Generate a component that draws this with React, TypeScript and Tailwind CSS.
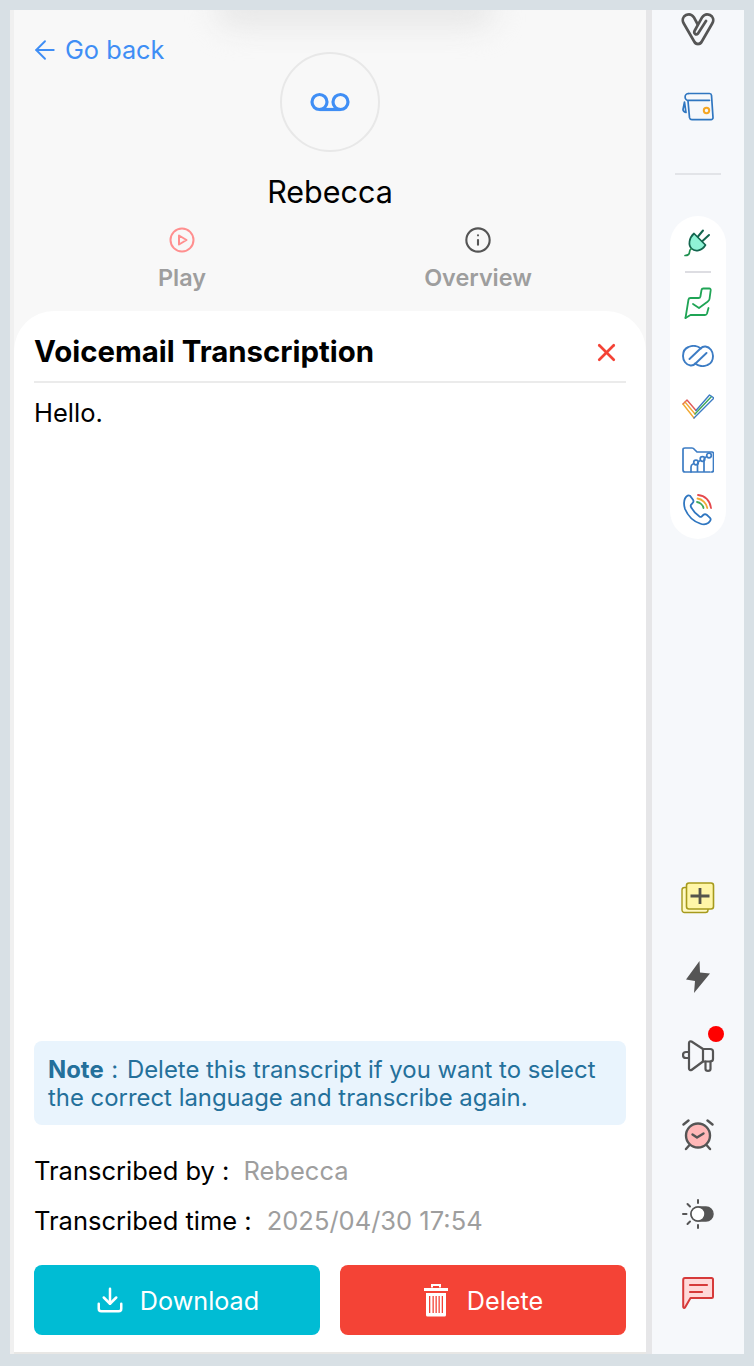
import React from "react";
import { ArrowLeft, Download, X, Info } from "lucide-react";

const font = { fontFamily: "Inter, 'Liberation Sans', sans-serif" };

function Voicemail() {
  return (
    <svg width="40" height="20" viewBox="0 0 40 20" fill="none" stroke="#3f8ef5" strokeWidth="3.200">
      <circle cx="9.500" cy="10" r="7.500" />
      <circle cx="30.500" cy="10" r="7.500" />
      <path d="M9.500 17.500h21" />
    </svg>
  );
}

function Trash() {
  return (
    <svg width="26" height="34" viewBox="0 0 26 34" fill="none">
      <path d="M9 4.500V2h8v2.500" stroke="#fff" strokeWidth="2" />
      <path d="M1 5h24v3H1z" fill="#fff" />
      <path fillRule="evenodd" clipRule="evenodd" d="M3 10h20v22a1.500 1.500 0 0 1-1.500 1.500h-17A1.500 1.500 0 0 1 3 32zM6 13v17h1.300V13zM9.500 13v17h1.300V13zM12.500 13v17h1.300V13zM15.500 13v17h1.300V13zM18.700 13v17H20V13z" fill="#fff" />
    </svg>
  );
}

function Paperclip() {
  return (
    <svg width="34" height="34" viewBox="0 0 34 34" fill="none" stroke="#555" strokeWidth="2.700" strokeLinecap="round" strokeLinejoin="round">
      <path d="M17 32c-1.800 0-3-1-3.800-2.500L2.500 11C1 8 2 4.500 5 3c3-1.300 6-.4 7.800 2.200L16.500 12" />
      <path d="M17 32c1.800 0 3-1 3.800-2.500L31.500 11c1.500-3 .5-6.500-2.500-8-3-1.300-6-.4-7.800 2.200L13.500 19c-1 2.200 1.500 4.500 3.500 2.500L25 9" />
    </svg>
  );
}

function Wallet() {
  return (
    <svg width="32" height="30" viewBox="0 0 32 30" fill="none" stroke="#2f76c0" strokeWidth="1.700" strokeLinecap="round" strokeLinejoin="round">
      <path d="M6.500 1.500h21a2 2 0 0 1 2 1.800L31 25.500a2 2 0 0 1-2 2.200H10a2.500 2.500 0 0 1-2.500-2L6 9" />
      <path d="M6.500 1.500a3.300 3.300 0 0 0 0 6.800h21" />
      <path d="M2.500 10L1 17.500c0 1.500 1.200 2.500 3 3L2.500 10z" />
      <circle cx="24.500" cy="18.500" r="2.700" stroke="#f5a623" strokeWidth="2" />
    </svg>
  );
}

function Plug() {
  return (
    <svg width="28" height="28" viewBox="0 0 28 28" fill="none" stroke="#14664f" strokeWidth="1.700" strokeLinecap="round" strokeLinejoin="round">
      <path d="M10 4.500L21.500 16C18 22 11 23 7.500 19.500 4 16 5 9 10 4.500z" fill="#8ff3d6" />
      <path d="M14 7.500L19 1.500M18.500 12L25 6" strokeWidth="2" />
      <path d="M7 20c-2.500 1.500-.5 4-2.500 5.500-1 .8-2 1-3.500 1" stroke="#1f8f4f" />
    </svg>
  );
}

function Sign() {
  return (
    <svg width="28" height="32" viewBox="0 0 28 32" fill="none" stroke="#1fa455" strokeWidth="1.800" strokeLinecap="round" strokeLinejoin="round">
      <path d="M1.500 31L4.500 12.500c.2-1 1-1.500 2-1.500h8c1 0 1.700-.6 1.900-1.500L17.500 3c.2-1 .8-1.500 1.800-1.500h6c1 0 1.500.7 1.400 1.700L25.500 12c-.2 1.300-1 2-2 2.800L15 21l-6-4" />
      <path d="M1.500 31l5-3H21c1 0 1.700-.6 2-1.500L24.500 21" />
    </svg>
  );
}

function Links() {
  const d = "M19 3.500C15 .500 10 .500 6.500 2 2.500 3.500 1 7.500 1 11c0 4.500 3 9 7.500 9.500 2 .2 3.500-.4 5-2L24.500 8";
  return (
    <svg width="32" height="22" viewBox="0 0 32 22" fill="none" stroke="#3c7cc4" strokeWidth="1.900" strokeLinecap="round" strokeLinejoin="round">
      <path d={d} />
      <path d={d} transform="rotate(180 16 11)" />
    </svg>
  );
}

function Check() {
  return (
    <svg width="32" height="26" viewBox="0 0 32 26" fill="none" strokeWidth="1.400" strokeLinecap="round" strokeLinejoin="round">
      <path d="M1 10l4-4 9 10.500" stroke="#e05a5a" />
      <path d="M3 8l10 12" stroke="#f2a935" />
      <path d="M1 10l11 14" stroke="#f2a935" />
      <path d="M13 20L29.500 2.500" stroke="#3fa85a" />
      <path d="M12 24L32 4l-4.500-3L14 16.500" stroke="#3c7cc4" />
    </svg>
  );
}

function Folder() {
  return (
    <svg width="32" height="26" viewBox="0 0 32 26" fill="none" stroke="#3c7cc4" strokeWidth="1.700" strokeLinecap="round" strokeLinejoin="round">
      <path d="M9 25H3c-1.200 0-2-.8-2-2V2.500C1 1.500 1.800 1 3 1h7c1 0 1.800.5 2.500 1.500L15 5h15c1 0 1.500.7 1.500 2v16c0 1.200-.8 2-2 2" />
      <path d="M9 25v-5c0-1.500.8-2.500 2-3M15.500 25v-8c0-1.500.8-2.500 2-3M22 25V13c0-1.500.8-2.500 2-3M9 25h19" />
      <circle cx="14" cy="15.500" r="2.300" />
      <circle cx="20.500" cy="12" r="2.300" />
      <circle cx="27" cy="8.500" r="2.300" />
    </svg>
  );
}

function Phone() {
  return (
    <svg width="30" height="32" viewBox="0 0 30 32" fill="none" strokeLinecap="round">
      <path d="M2 4.500c1.300-2.500 3.500-3.500 5-2.800l3 4c.8 1.300.5 2.500-.5 3.500L8 10.800c-.5.700-.4 1.400 0 2.200 1.800 3.500 5.500 7.500 8.500 9.500.8.500 1.500.5 2.200 0l1.800-1.700c1-.8 2-.8 3.200 0l3.300 3c1.200 1.300.8 3-1.500 5-2.500 2-5.500 2-8.500.7C11 27.500 5 22 2 15 .8 11 .6 7.500 2 4.500z" stroke="#2f76c0" strokeWidth="1.800" />
      <path d="M15 1c7 .5 12 5.500 13 13" stroke="#e5484d" strokeWidth="1.800" />
      <path d="M14.500 4.500c4.500.5 9 4.500 9.800 9.500" stroke="#f2a935" strokeWidth="1.800" />
      <path d="M14 8c3 .5 6 3 6.500 6" stroke="#3fa85a" strokeWidth="1.800" />
    </svg>
  );
}

function Notes() {
  return (
    <svg width="34" height="32" viewBox="0 0 34 32" fill="none" strokeLinejoin="round">
      <rect x="1" y="5.500" width="26" height="25" rx="2.500" fill="#fff9c4" stroke="#a69a1c" strokeWidth="1.400" />
      <rect x="5.500" y="1" width="27" height="26" rx="2.500" fill="#fff6a8" stroke="#a69a1c" strokeWidth="1.600" />
      <path d="M19 6v16M9.500 14h19" stroke="#55554c" strokeWidth="2.800" />
    </svg>
  );
}

function Bolt() {
  return (
    <svg width="24" height="32" viewBox="0 0 24 32" fill="#555">
      <path d="M13.500 0L0 18.500l9 1.500L8 32 24 12.500 14 11.500z" />
    </svg>
  );
}

function Megaphone() {
  return (
    <svg width="33" height="33" viewBox="0 0 33 33" fill="none" stroke="#555" strokeWidth="2.200" strokeLinecap="round" strokeLinejoin="round">
      <path d="M7 3c0-1.500 1.500-2 2.500-1.500L21 9h7c1.500 0 3 1 3 2.500V19c0 1.500-1.500 2.500-3 2.500h-7L9.500 30c-1 .5-2.500 0-2.500-1.500z" />
      <path d="M21 9v12.500" />
      <path d="M7 12H4a3 3 0 0 0 0 6h3" />
      <path d="M23.500 21.500V29c0 2.500 5 2.500 5 0v-7.500" />
    </svg>
  );
}

function Alarm() {
  return (
    <svg width="32" height="32" viewBox="0 0 32 32" fill="none" stroke="#555" strokeWidth="2.400" strokeLinecap="round" strokeLinejoin="round">
      <circle cx="16" cy="16.500" r="12" fill="#ffb8b8" />
      <path d="M10.500 15.500l4.500 3 6.500-4" />
      <path d="M1.500 5.500l5-4M30.500 5.500l-5-4M7.500 26l-3.500 4M24.500 26l3.500 4" />
    </svg>
  );
}

function Theme() {
  return (
    <svg width="32" height="30" viewBox="0 0 32 30" fill="none" stroke="#555" strokeWidth="2" strokeLinecap="round">
      <rect x="9" y="8" width="22" height="14" rx="7" fill="#555" stroke="#555" strokeWidth="1.500" />
      <circle cx="16" cy="15" r="7" fill="#fff" stroke="#555" strokeWidth="1.500" />
      <path d="M16 1v3M16 26v3M1 15h3.500M5.500 5l2.500 2.500M5.500 25L8 22.500" />
    </svg>
  );
}

function Chat() {
  return (
    <svg width="32" height="32" viewBox="0 0 32 32" fill="none" stroke="#d63a3a" strokeWidth="2" strokeLinecap="round" strokeLinejoin="round">
      <path d="M3 1h26.500c.8 0 1.500.7 1.500 1.500v17c0 .8-.7 1.500-1.500 1.500H8.500L3 30.500c-.8.800-1.800.2-1.800-.7V3C1.200 1.800 2 1 3 1z" fill="#ffd9d9" />
      <path d="M8 8h17M8 15h12" strokeWidth="2.200" />
    </svg>
  );
}

function PlayIcon() {
  return (
    <svg width="26" height="26" viewBox="0 0 26 26" fill="none" stroke="#ff8f8f" strokeWidth="2" strokeLinejoin="round">
      <circle cx="13" cy="13" r="11.500" />
      <path d="M10 8.500l7.500 4.500-7.500 4.500z" />
    </svg>
  );
}

export default function App() {
  return (
    <div style={font} className="h-[1366px] w-[754px] overflow-hidden bg-[#d8e0e5] pt-[10px] pr-[10px] pb-[12px] pl-[10px]">
      <div className="flex h-full w-full">
        <div className="relative flex w-[636px] flex-col overflow-hidden border-l-4 border-[#f0f0f0] bg-[#f8f8f8]">
          <div className="absolute top-[-22px] left-[201px] h-[40px] w-[280px] rounded-full bg-[#e8e8e8] blur-[14px]"></div>
          <div className="relative h-[301px] shrink-0">
            <div className="absolute top-[24px] left-[16px] flex items-center gap-[5px] text-[#3f8ef5]">
              <ArrowLeft size={30} strokeWidth={1.500} />
              <span className="text-[25.300px] leading-[32px]">Go back</span>
            </div>
            <div className="flex flex-col items-center pt-[42px]">
              <div className="flex h-[100px] w-[100px] items-center justify-center rounded-full border-2 border-[#e8e8e8]">
                <Voicemail />
              </div>
              <div className="mt-[20px] text-[30.500px] leading-[40px] text-black">Rebecca</div>
            </div>
            <div className="mt-[15px] flex">
              <div className="flex w-[336px] flex-col items-center">
                <PlayIcon />
                <span className="mt-[10px] text-[23.400px] leading-[30px] font-semibold text-[#9e9e9e]">Play</span>
              </div>
              <div className="flex w-[256px] flex-col items-center">
                <Info size={28} strokeWidth={1.800} color="#555" className="my-[-1px]" />
                <span className="mt-[10px] text-[23.400px] leading-[30px] font-semibold text-[#9e9e9e]">Overview</span>
              </div>
            </div>
          </div>
          <div className="flex min-h-0 flex-1 flex-col rounded-t-[40px] border-b-2 border-[#e8e7e5] bg-white px-[20px] pb-[17px]">
            <div className="flex h-[72px] shrink-0 items-center justify-between border-b-2 border-[#ebebeb] pt-[12px]">
              <span className="text-[29.400px] leading-[40px] font-bold text-black">Voicemail Transcription</span>
              <X size={29} strokeWidth={2.200} color="#f44336" className="mr-[5px]" />
            </div>
            <p className="mt-[14px] text-[25.500px] leading-[32px] text-black">Hello.</p>
            <div className="mt-auto rounded-[8px] bg-[#e9f4fd] px-[14px] pt-[15px] pb-[13px] text-[23.900px] leading-[28px] text-[#24709b]">
              <b className="mr-[1px] font-bold">Note</b> : <span className="ml-[2px]">Delete this transcript if you want to select the correct language and transcribe again.</span>
            </div>
            <div className="mt-[30px] flex text-[25.500px] leading-[32px]">
              <span className="text-black">Transcribed by :</span>
              <span className="ml-[14px] text-[#9e9e9e]">Rebecca</span>
            </div>
            <div className="mt-[18px] flex text-[25.500px] leading-[32px]">
              <span className="text-black">Transcribed time :</span>
              <span className="ml-[15px] text-[#9e9e9e]">2025/04/30 17:54</span>
            </div>
            <div className="mt-[28px] flex gap-[20px]">
              <button className="flex h-[70px] w-[286px] items-center justify-center gap-[15px] rounded-[8px] bg-[#00bcd4] text-[25.200px] text-white">
                <Download size={30} strokeWidth={2} />
                <span className="pt-[3px]">Download</span>
              </button>
              <button className="flex h-[70px] w-[286px] items-center justify-center gap-[18px] rounded-[8px] bg-[#f44336] text-[25.200px] text-white">
                <Trash />
                <span className="pt-[3px]">Delete</span>
              </button>
            </div>
          </div>
        </div>
        <div className="w-[6px] bg-[#e6e6e8]"></div>
        <div className="flex w-[92px] flex-col items-center bg-[#f6f8fb]">
          <div className="flex h-[166px] w-full shrink-0 flex-col items-center">
            <div className="mt-[2px] h-[34px]"><Paperclip /></div>
            <div className="mt-[46px] h-[30px]"><Wallet /></div>
            <div className="mt-[51px] h-[2px] w-[46px] bg-[#e2e4e8]"></div>
          </div>
          <div className="mt-[40px] flex w-[56px] flex-col items-center rounded-[28px] bg-white pt-[13px] pb-[13px]">
            <div className="h-[28px]"><Plug /></div>
            <div className="my-[14px] h-[2px] w-[26px] bg-[#dddde2]"></div>
            <div className="h-[32px]"><Sign /></div>
            <div className="mt-[26px] h-[22px]"><Links /></div>
            <div className="mt-[27px] h-[26px]"><Check /></div>
            <div className="mt-[27px] h-[26px]"><Folder /></div>
            <div className="mt-[21px] h-[32px]"><Phone /></div>
          </div>
          <div className="mt-auto flex flex-col items-center gap-[47px] pb-[45px]">
            <div className="h-[32px]"><Notes /></div>
            <div className="h-[32px]"><Bolt /></div>
            <div className="relative h-[32px]">
              <Megaphone />
              <div className="absolute top-[-14px] right-[-9px] h-[16px] w-[16px] rounded-full bg-[#ff0000]"></div>
            </div>
            <div className="h-[32px]"><Alarm /></div>
            <div className="flex h-[32px] items-center"><Theme /></div>
            <div className="h-[32px]"><Chat /></div>
          </div>
        </div>
      </div>
    </div>
  );
}
